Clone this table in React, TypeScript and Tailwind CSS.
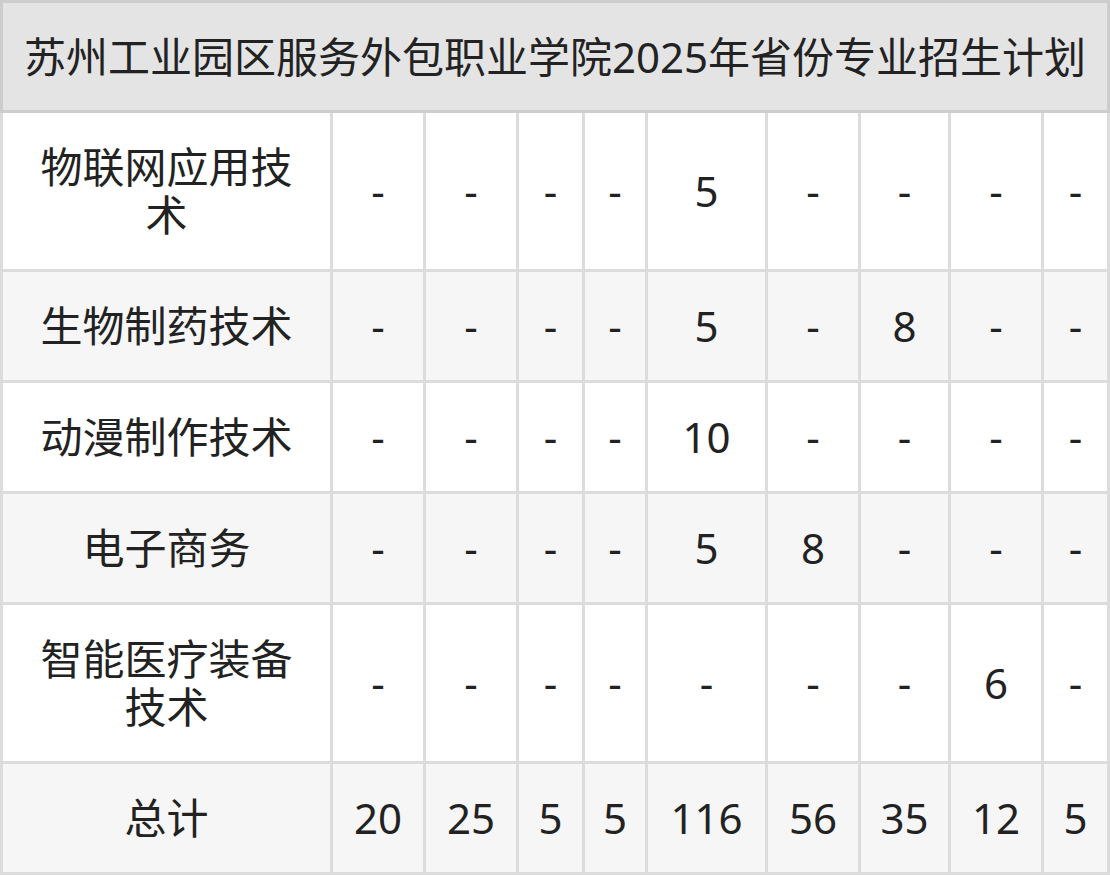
const rows: { name: string; values: string[]; total?: boolean }[] = [
  { name: '物联网应用技术', values: ['-', '-', '-', '-', '5', '-', '-', '-', '-'] },
  { name: '生物制药技术', values: ['-', '-', '-', '-', '5', '-', '8', '-', '-'] },
  { name: '动漫制作技术', values: ['-', '-', '-', '-', '10', '-', '-', '-', '-'] },
  { name: '电子商务', values: ['-', '-', '-', '-', '5', '8', '-', '-', '-'] },
  { name: '智能医疗装备技术', values: ['-', '-', '-', '-', '-', '-', '-', '6', '-'] },
  { name: '总计', values: ['20', '25', '5', '5', '116', '56', '35', '12', '5'], total: true },
];

export default function App() {
  return (
    <div
      className="w-[1110px] h-[876px] bg-white text-[#222] text-[42px]"
      style={{ fontFamily: '"Noto Sans", "Noto Sans CJK SC", sans-serif' }}
    >
      <div className="border-[3px] border-[#cdcdcd] bg-[#e4e4e4] py-[30px] leading-[47px] text-center whitespace-nowrap">
        苏州工业园区服务外包职业学院2025年省份专业招生计划
      </div>
      <div className="grid grid-cols-[327px_90px_90px_63px_60px_117px_90px_87px_90px_63px] gap-[3px] bg-[#dcdcdc] px-[3px] pb-[3px]">
        {rows.map((row, i) => {
          const bg = i % 2 === 1 ? 'bg-[#f6f6f6]' : 'bg-white';
          return (
            <div key={row.name} className="contents">
              <div className={`${bg} px-[30px] py-[30px] leading-[48px] text-center flex items-center justify-center`}>
                {row.name}
              </div>
              {row.values.map((v, j) => (
                <div key={j} className={`${bg} leading-[48px] text-center flex items-center justify-center`}>
                  {v}
                </div>
              ))}
            </div>
          );
        })}
      </div>
    </div>
  );
}
